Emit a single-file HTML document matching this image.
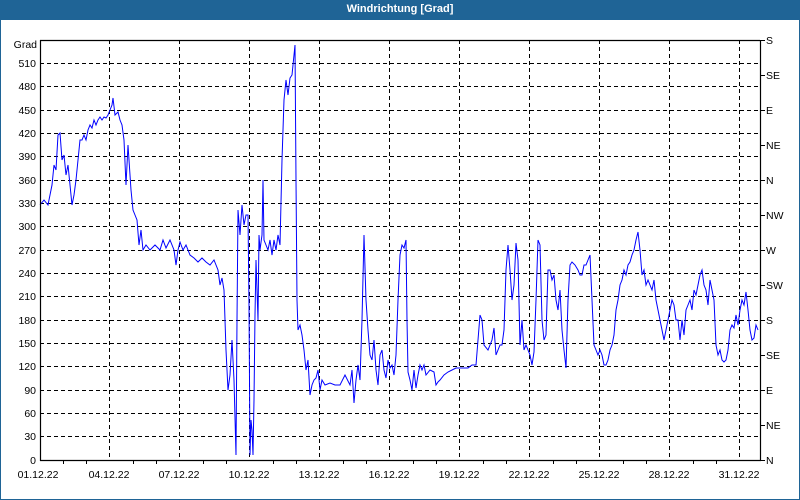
<!DOCTYPE html>
<html><head><meta charset="utf-8"><style>
html,body{margin:0;padding:0;background:#fff}
#w{position:relative;width:798px;height:499px;border:1px solid #1f6496;border-top:none;overflow:hidden}
#t{height:20px;background:#1f6496;color:#fff;font:bold 11px "Liberation Sans",sans-serif;text-align:center;line-height:19px}
svg text{font-family:"Liberation Sans",sans-serif;font-size:10.5px;fill:#000}
</style></head><body>
<div id="w"><div id="t">Windrichtung [Grad]</div>
<svg width="800" height="480" viewBox="0 20 800 480" style="position:absolute;left:-1px;top:20px">
<g stroke="#000" stroke-dasharray="4,3" stroke-width="1">
<line x1="40" x2="760" y1="63.5" y2="63.5"/><line x1="40" x2="760" y1="86.5" y2="86.5"/><line x1="40" x2="760" y1="110.5" y2="110.5"/><line x1="40" x2="760" y1="133.5" y2="133.5"/><line x1="40" x2="760" y1="156.5" y2="156.5"/><line x1="40" x2="760" y1="180.5" y2="180.5"/><line x1="40" x2="760" y1="203.5" y2="203.5"/><line x1="40" x2="760" y1="226.5" y2="226.5"/><line x1="40" x2="760" y1="250.5" y2="250.5"/><line x1="40" x2="760" y1="273.5" y2="273.5"/><line x1="40" x2="760" y1="296.5" y2="296.5"/><line x1="40" x2="760" y1="320.5" y2="320.5"/><line x1="40" x2="760" y1="343.5" y2="343.5"/><line x1="40" x2="760" y1="366.5" y2="366.5"/><line x1="40" x2="760" y1="390.5" y2="390.5"/><line x1="40" x2="760" y1="413.5" y2="413.5"/><line x1="40" x2="760" y1="436.5" y2="436.5"/>
<line y1="40" y2="460" x1="109.5" x2="109.5"/><line y1="40" y2="460" x1="179.5" x2="179.5"/><line y1="40" y2="460" x1="249.5" x2="249.5"/><line y1="40" y2="460" x1="319.5" x2="319.5"/><line y1="40" y2="460" x1="389.5" x2="389.5"/><line y1="40" y2="460" x1="459.5" x2="459.5"/><line y1="40" y2="460" x1="529.5" x2="529.5"/><line y1="40" y2="460" x1="599.5" x2="599.5"/><line y1="40" y2="460" x1="669.5" x2="669.5"/><line y1="40" y2="460" x1="739.5" x2="739.5"/>
</g>
<polyline fill="none" stroke="#00f" stroke-width="1" points="40,205 44,200 48,205 52,185 54,165 56,170 58,135 60,133 62,160 64,155 66,175 68,165 70,185 72,205 74,195 76,180 78,160 80,140 82,140 84,135 86,140 88,130 90,125 92,128 94,120 96,125 98,120 100,117 102,120 104,117 106,118 108,115 110,110 112,105 113,98 115,115 118,112 120,120 122,125 124,140 126,185 128,145 129,160 131,190 133,210 135,215 137,220 139,245 141,230 143,250 146,245 150,250 155,245 160,250 163,240 166,248 170,240 174,250 176,265 178,250 180,242 183,250 186,245 190,255 194,258 198,262 202,258 206,262 210,265 214,260 218,270 220,285 222,278 224,290 226,350 228,390 230,375 232,340 234,380 236,455 237,320 238,210 240,235 242,205 244,225 246,215 248,215 249,305 250,455 251,420 252,430 253,455 254,400 255,315 256,260 257,290 258,320 259,235 260,250 262,235 263,180 264,240 266,245 268,250 270,240 272,255 274,240 276,250 278,235 280,245 282,160 284,100 286,80 288,95 290,78 292,75 294,55 295,45 296,180 297,300 298,330 300,325 302,335 304,350 306,370 308,360 310,395 312,385 314,380 316,378 318,370 320,390 322,380 325,385 330,383 335,385 340,385 345,375 350,385 352,370 354,403 356,380 358,365 360,380 362,320 364,235 366,300 368,330 370,355 372,360 374,340 376,370 378,385 380,355 382,350 384,370 386,378 388,360 390,368 392,365 394,375 396,355 398,300 400,255 402,245 404,248 406,240 407,320 408,372 410,380 412,390 414,370 416,388 418,375 420,365 422,370 424,365 426,375 430,370 434,372 436,385 438,382 440,380 444,375 448,372 452,370 456,368 460,368 464,368 468,368 472,365 476,365 478,340 480,315 482,320 484,345 488,350 492,340 494,328 496,355 500,345 502,345 504,330 506,270 508,245 510,270 512,300 514,285 516,243 518,260 520,345 522,320 524,350 526,345 528,350 530,355 532,365 534,352 536,300 538,240 540,245 542,320 544,340 546,335 548,270 550,270 552,280 554,275 556,300 558,310 560,290 562,330 564,350 566,368 568,300 570,265 572,262 575,265 578,270 580,275 582,275 584,265 586,265 588,260 590,255 592,300 594,345 596,350 598,355 600,350 602,355 604,365 606,365 608,360 610,350 612,345 614,335 616,310 618,300 620,285 622,280 624,270 626,275 628,265 630,262 632,255 634,250 636,240 638,232 640,250 642,275 644,270 646,285 648,280 650,285 652,290 654,280 656,300 658,310 660,320 662,330 664,340 666,330 668,320 670,310 672,300 674,305 676,320 678,320 680,340 682,320 684,335 686,310 688,305 690,300 692,310 694,290 696,295 698,285 700,275 702,270 704,285 706,290 708,305 710,280 712,290 714,300 716,345 718,355 720,350 722,360 724,362 726,360 728,350 730,330 732,325 734,328 736,315 738,325 740,310 742,300 744,305 746,292 748,310 750,330 752,340 754,338 756,325 758,330"/>
<g stroke="#000" stroke-width="1.2" fill="none">
<line x1="40.5" y1="40" x2="40.5" y2="461"/><line x1="40" y1="40.5" x2="760" y2="40.5"/><line x1="40" y1="460.5" x2="761" y2="460.5"/><line x1="760.5" y1="40" x2="760.5" y2="461"/>
</g>
<g stroke="#000" stroke-width="1">
<line x1="63.5" x2="63.5" y1="460" y2="464"/><line x1="86.5" x2="86.5" y1="460" y2="464"/><line x1="133.5" x2="133.5" y1="460" y2="464"/><line x1="156.5" x2="156.5" y1="460" y2="464"/><line x1="203.5" x2="203.5" y1="460" y2="464"/><line x1="226.5" x2="226.5" y1="460" y2="464"/><line x1="273.5" x2="273.5" y1="460" y2="464"/><line x1="296.5" x2="296.5" y1="460" y2="464"/><line x1="343.5" x2="343.5" y1="460" y2="464"/><line x1="366.5" x2="366.5" y1="460" y2="464"/><line x1="413.5" x2="413.5" y1="460" y2="464"/><line x1="436.5" x2="436.5" y1="460" y2="464"/><line x1="483.5" x2="483.5" y1="460" y2="464"/><line x1="506.5" x2="506.5" y1="460" y2="464"/><line x1="553.5" x2="553.5" y1="460" y2="464"/><line x1="576.5" x2="576.5" y1="460" y2="464"/><line x1="623.5" x2="623.5" y1="460" y2="464"/><line x1="646.5" x2="646.5" y1="460" y2="464"/><line x1="693.5" x2="693.5" y1="460" y2="464"/><line x1="716.5" x2="716.5" y1="460" y2="464"/>
<line x1="760" x2="765" y1="40.5" y2="40.5"/><line x1="760" x2="765" y1="75.5" y2="75.5"/><line x1="760" x2="765" y1="110.5" y2="110.5"/><line x1="760" x2="765" y1="145.5" y2="145.5"/><line x1="760" x2="765" y1="180.5" y2="180.5"/><line x1="760" x2="765" y1="215.5" y2="215.5"/><line x1="760" x2="765" y1="250.5" y2="250.5"/><line x1="760" x2="765" y1="285.5" y2="285.5"/><line x1="760" x2="765" y1="320.5" y2="320.5"/><line x1="760" x2="765" y1="355.5" y2="355.5"/><line x1="760" x2="765" y1="390.5" y2="390.5"/><line x1="760" x2="765" y1="425.5" y2="425.5"/><line x1="760" x2="765" y1="460.5" y2="460.5"/>
</g>
<g text-anchor="end">
<text x="37" y="48">Grad</text>
<text x="36" y="67">510</text><text x="36" y="90">480</text><text x="36" y="114">450</text><text x="36" y="137">420</text><text x="36" y="160">390</text><text x="36" y="184">360</text><text x="36" y="207">330</text><text x="36" y="230">300</text><text x="36" y="254">270</text><text x="36" y="277">240</text><text x="36" y="300">210</text><text x="36" y="324">180</text><text x="36" y="347">150</text><text x="36" y="370">120</text><text x="36" y="394">90</text><text x="36" y="417">60</text><text x="36" y="440">30</text><text x="36" y="464">0</text>
</g>
<g>
<text x="766" y="44">S</text><text x="766" y="79">SE</text><text x="766" y="114">E</text><text x="766" y="149">NE</text><text x="766" y="184">N</text><text x="766" y="219">NW</text><text x="766" y="254">W</text><text x="766" y="289">SW</text><text x="766" y="324">S</text><text x="766" y="359">SE</text><text x="766" y="394">E</text><text x="766" y="429">NE</text><text x="766" y="464">N</text>
</g>
<g text-anchor="middle">
<text x="38" y="478">01.12.22</text><text x="109" y="478">04.12.22</text><text x="179" y="478">07.12.22</text><text x="249" y="478">10.12.22</text><text x="319" y="478">13.12.22</text><text x="389" y="478">16.12.22</text><text x="459" y="478">19.12.22</text><text x="529" y="478">22.12.22</text><text x="599" y="478">25.12.22</text><text x="669" y="478">28.12.22</text><text x="739" y="478">31.12.22</text>
</g>
</svg></div>
</body></html>
